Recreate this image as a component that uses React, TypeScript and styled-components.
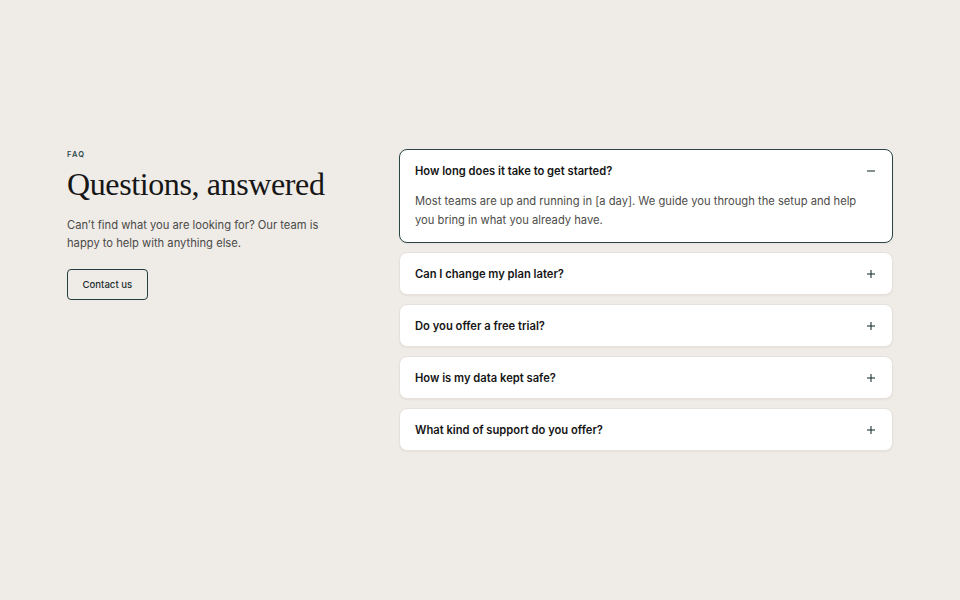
import { useState } from "react";
import styled, { createGlobalStyle } from "styled-components";

const GlobalStyle = createGlobalStyle`
  * { box-sizing: border-box; }
  html, body { margin: 0; padding: 0; }
  body {
    background: #efebe7;
    font-family: Inter, "Noto Sans", sans-serif;
    color: #1a1a1a;
  }
`;

const Page = styled.div`
  min-height: 600px;
  display: flex;
  align-items: center;
  justify-content: center;
`;

const Wrap = styled.div`
  width: 826px;
  display: grid;
  grid-template-columns: 270px 494px;
  justify-content: space-between;
  align-items: start;
`;

const Intro = styled.div`
  display: flex;
  flex-direction: column;
`;

const Eyebrow = styled.div`
  font-size: 7.5px;
  line-height: 10px;
  margin-top: 1px;
  font-weight: 600;
  letter-spacing: 0.16em;
  color: #2d4a4c;
`;

const Title = styled.h1`
  margin: 7px 0 0;
  font-family: "Liberation Serif", "DejaVu Serif", serif;
  font-weight: 400;
  font-size: 32px;
  letter-spacing: -0.012em;
  line-height: 35px;
  color: #161616;
`;

const Lead = styled.p`
  margin: 14px 0 0;
  font-size: 11.2px;
  line-height: 18px;
  color: #4a4a48;
`;

const ContactButton = styled.button`
  align-self: flex-start;
  margin-top: 17px;
  height: 31px;
  padding: 0 14.5px;
  border: 1px solid #243d3e;
  border-radius: 4px;
  background: transparent;
  font-family: Inter, sans-serif;
  font-size: 9.6px;
  font-weight: 500;
  color: #1d2f30;
  cursor: pointer;
`;

const List = styled.div`
  display: flex;
  flex-direction: column;
  gap: 9px;
`;

const Card = styled.div<{ open: boolean }>`
  background: #ffffff;
  border: 1px solid ${(p) => (p.open ? "#2b4446" : "#e6e1dc")};
  border-radius: 8px;
  box-shadow: 0 1px 2px rgba(60, 40, 20, 0.05);
`;

const Question = styled.button`
  width: 100%;
  height: 41px;
  padding: 0 15px;
  display: flex;
  align-items: center;
  justify-content: space-between;
  background: none;
  border: none;
  font-family: Inter, sans-serif;
  font-size: 11.2px;
  font-weight: 600;
  color: #151515;
  text-align: left;
  cursor: pointer;
`;

const Answer = styled.p`
  margin: 0;
  padding: 1px 15px 12px 15px;
  font-size: 11.2px;
  line-height: 19px;
  color: #4d4c49;
`;

const Icon = styled.svg`
  width: 10px;
  height: 10px;
  margin-right: 1px;
  flex: none;
`;

const faqs = [
  {
    q: "How long does it take to get started?",
    a: "Most teams are up and running in [a day]. We guide you through the setup and help you bring in what you already have.",
  },
  { q: "Can I change my plan later?", a: "Yes, you can switch plans at any time." },
  { q: "Do you offer a free trial?", a: "Yes, every plan starts with a free trial." },
  { q: "How is my data kept safe?", a: "Your data is encrypted in transit and at rest." },
  { q: "What kind of support do you offer?", a: "Our team is available by email and chat." },
];

const Toggle = ({ open }: { open: boolean }) => (
  <Icon viewBox="0 0 10 10" fill="none" stroke="#1f3536" strokeWidth="1.1">
    <line x1="1" y1="5" x2="9" y2="5" />
    {!open && <line x1="5" y1="1" x2="5" y2="9" />}
  </Icon>
);

const App = () => {
  const [openIndex, setOpenIndex] = useState<number>(0);

  return (
    <Page>
      <GlobalStyle />
      <Wrap>
        <Intro>
          <Eyebrow>FAQ</Eyebrow>
          <Title>Questions, answered</Title>
          <Lead>
            Can’t find what you are looking for? Our team is happy to help with
            anything else.
          </Lead>
          <ContactButton>Contact us</ContactButton>
        </Intro>
        <List>
          {faqs.map((f, i) => (
            <Card key={f.q} open={openIndex === i}>
              <Question onClick={() => setOpenIndex(openIndex === i ? -1 : i)}>
                {f.q}
                <Toggle open={openIndex === i} />
              </Question>
              {openIndex === i && <Answer>{f.a}</Answer>}
            </Card>
          ))}
        </List>
      </Wrap>
    </Page>
  );
};

export default App;
